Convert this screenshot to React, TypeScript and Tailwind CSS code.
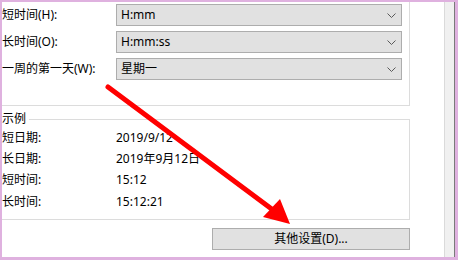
import React from "react";

const font = { fontFamily: '"Noto Sans", "Noto Sans CJK SC", sans-serif' };

function Chevron() {
  return (
    <svg width="9" height="5" viewBox="0 0 9 5" className="shrink-0">
      <path d="M0.5 0.5 L4.5 4.5 L8.5 0.5" fill="none" stroke="#5a5a5a" strokeWidth="1" />
    </svg>
  );
}

function SelectRow({ label, value }: { label: string; value: string }) {
  return (
    <div className="flex items-center h-[22px]">
      <div className="w-[114px] shrink-0">{label}</div>
      <div className="flex items-center justify-between w-[286px] h-[22px] bg-[#e1e1e1] border border-[#adadad] pl-[4px] pr-[5px]">
        <span>{value}</span>
        <Chevron />
      </div>
    </div>
  );
}

function ExRow({ label, value }: { label: string; value: string }) {
  return (
    <div className="flex items-center h-[21.3px]">
      <div className="w-[114px] shrink-0">{label}</div>
      <div>{value}</div>
    </div>
  );
}

export default function App() {
  return (
    <div
      className="relative w-[458px] h-[260px] bg-[#dfb1df] pt-[2px] pl-[2px] pb-[3px] flex text-[12px] leading-[16px] text-black overflow-hidden"
      style={font}
    >
      <div className="flex-1 bg-white flex flex-col">
        <div className="w-[408px] border-r border-b border-[#dcdcdc] pr-[7px] pb-[25px] pt-[2px] flex flex-col gap-[5px]">
          <SelectRow label="短时间(H):" value="H:mm" />
          <SelectRow label="长时间(O):" value="H:mm:ss" />
          <SelectRow label="一周的第一天(W):" value="星期一" />
        </div>
        <fieldset className="mt-[5px] w-[408px] border-t border-r border-b border-l-0 border-[#dcdcdc] pb-[7px]">
          <legend className="pr-[3px] leading-[16px]">示例</legend>
          <ExRow label="短日期:" value="2019/9/12" />
          <ExRow label="长日期:" value="2019年9月12日" />
          <ExRow label="短时间:" value="15:12" />
          <ExRow label="长时间:" value="15:12:21" />
        </fieldset>
        <div className="w-[408px] flex justify-end mt-[8px]">
          <div className="w-[198px] h-[22px] bg-[#e1e1e1] border border-[#adadad] flex items-center justify-center">
            其他设置(D)...
          </div>
        </div>
      </div>
      <div className="w-[10px] bg-[#f0f0f0] border-l border-[#dadada]" />
      <div className="w-[1px] bg-[#7a7a7a]" />
      <div className="w-[3px]" />
      <svg
        className="absolute left-0 top-0 pointer-events-none"
        width="458"
        height="260"
        viewBox="0 0 458 260"
      >
        <line x1="108" y1="87" x2="273" y2="210" stroke="#ff0000" strokeWidth="5" strokeLinecap="round" />
        <polygon points="290,224 263,217 280,199" fill="#ff0000" />
      </svg>
    </div>
  );
}
